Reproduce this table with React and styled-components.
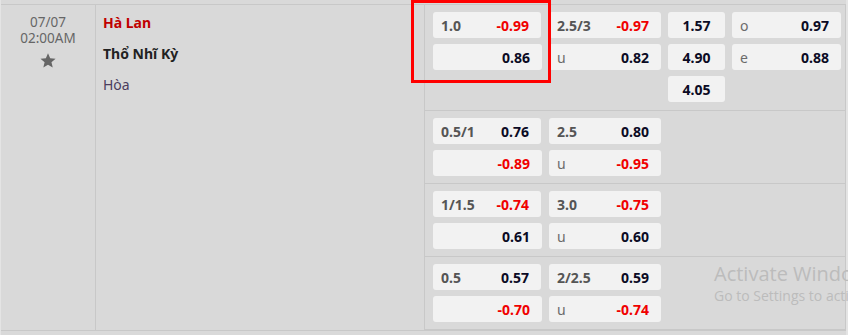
import React from "react";
import styled, { createGlobalStyle } from "styled-components";

const Global = createGlobalStyle`
  html, body { margin: 0; padding: 0; }
  body {
    background: #e4e4e4;
    font-family: "Noto Sans", "Open Sans", sans-serif;
    overflow: hidden;
  }
`;

const Page = styled.div`
  position: relative;
  width: 848px;
  height: 335px;
  overflow: hidden;
`;

const Table = styled.div`
  margin-left: 1px;
  width: 845px;
  padding-top: 4px;
  background: #d9d9d9;
  height: 331px;
`;

const MatchRow = styled.div`
  display: flex;
  border-top: 1px solid #c8c8c8;
  border-right: 1px solid #c8c8c8;
  border-bottom: 1px solid #c8c8c8;
`;

const DateCol = styled.div`
  width: 94px;
  border-right: 1px solid #c8c8c8;
  padding-top: 9px;
  display: flex;
  flex-direction: column;
  align-items: center;
  color: #666;
  font-size: 13.5px;
  line-height: 16px;
`;

const Star = styled.svg`
  margin-top: 6px;
  width: 18px;
  height: 17px;
  fill: #666;
`;

const TeamCol = styled.div`
  width: 321px;
  padding: 2px 0 0 7px;
  border-right: 1px solid #c8c8c8;
`;

const Team = styled.div`
  height: 31px;
  display: flex;
  align-items: center;
  font-size: 14px;
  font-weight: ${(p) => (p.$bold ? 700 : 400)};
  color: ${(p) => p.$color};
`;

const OddsCol = styled.div`
  flex: 1;
  display: flex;
  flex-direction: column;
`;

const Group = styled.div`
  display: grid;
  grid-template-columns: 109px 112px 57px 109px;
  grid-auto-rows: 26px;
  column-gap: 7px;
  row-gap: 6px;
  padding: 7px 0 ${(p) => (p.$first ? 8 : 7)}px 8px;
  border-bottom: ${(p) => (p.$last ? "none" : "1px solid #c8c8c8")};
  & > :first-child { margin-right: 1px; }
`;

const Cell = styled.div`
  grid-column: ${(p) => p.$col};
  background: #f2f2f2;
  border-radius: 3px;
  display: flex;
  align-items: center;
  justify-content: ${(p) => (p.$center ? "center" : "space-between")};
  padding: ${(p) => (p.$center ? "0" : "0 12px 0 8px")};
  font-size: 14px;
  font-weight: 700;
`;

const Label = styled.span`
  color: ${(p) => (p.$light ? "#6b6b6b" : "#555")};
  font-weight: ${(p) => (p.$light ? 400 : 700)};
`;

const Value = styled.span`
  color: ${(p) => (p.$neg ? "#f00000" : "#0b0b24")};
  font-weight: 700;
`;

const Highlight = styled.div`
  position: absolute;
  left: 411px;
  top: 0px;
  width: 134px;
  height: 77px;
  border: 3px solid #ff0000;
`;

const Watermark = styled.div`
  position: absolute;
  left: 714px;
  top: 260px;
  white-space: nowrap;
  color: #bcbcbc;
  font-family: "Open Sans", "Noto Sans", sans-serif;
`;

const WmTitle = styled.div`
  font-size: 20px;
  line-height: 27px;
`;

const WmSub = styled.div`
  font-size: 14px;
  line-height: 18px;
`;

const isNeg = (v) => v.startsWith("-");

function OddCell({ col, label, light, value }) {
  return (
    <Cell $col={col}>
      <Label $light={light}>{label}</Label>
      <Value $neg={isNeg(value)}>{value}</Value>
    </Cell>
  );
}

const groups = [
  [
    ["0.5/1", "0.76", "2.5", "0.80"],
    ["", "-0.89", "u", "-0.95"],
  ],
  [
    ["1/1.5", "-0.74", "3.0", "-0.75"],
    ["", "0.61", "u", "0.60"],
  ],
  [
    ["0.5", "0.57", "2/2.5", "0.59"],
    ["", "-0.70", "u", "-0.74"],
  ],
];

export default function App() {
  return (
    <Page>
      <Global />
      <Table>
        <MatchRow>
          <DateCol>
            <div>07/07</div>
            <div>02:00AM</div>
            <Star viewBox="0 0 24 24">
              <path d="M12 1.8l3.1 7.1 7.6.6-5.8 5 1.8 7.5L12 18l-6.6 4 1.8-7.5-5.8-5 7.6-.6z" />
            </Star>
          </DateCol>
          <TeamCol>
            <Team $bold $color="#c00000">Hà Lan</Team>
            <Team $bold $color="#222">Thổ Nhĩ Kỳ</Team>
            <Team $color="#4b3d5e">Hòa</Team>
          </TeamCol>
          <OddsCol>
            <Group $first>
              <OddCell col={1} label="1.0" value="-0.99" />
              <OddCell col={2} label="2.5/3" value="-0.97" />
              <Cell $col={3} $center><Value>1.57</Value></Cell>
              <OddCell col={4} label="o" light value="0.97" />
              <OddCell col={1} label="" value="0.86" />
              <OddCell col={2} label="u" light value="0.82" />
              <Cell $col={3} $center><Value>4.90</Value></Cell>
              <OddCell col={4} label="e" light value="0.88" />
              <Cell $col={3} $center><Value>4.05</Value></Cell>
            </Group>
            {groups.map((g, gi) => (
              <Group key={gi} $last={false}>
                {g.map((r, ri) => (
                  <React.Fragment key={ri}>
                    <OddCell col={1} label={r[0]} value={r[1]} />
                    <OddCell col={2} label={r[2]} light={r[2] === "u"} value={r[3]} />
                  </React.Fragment>
                ))}
              </Group>
            ))}
          </OddsCol>
        </MatchRow>
      </Table>
      <Highlight />
      <Watermark>
        <WmTitle>Activate Windows</WmTitle>
        <WmSub>Go to Settings to activate Windows.</WmSub>
      </Watermark>
    </Page>
  );
}
